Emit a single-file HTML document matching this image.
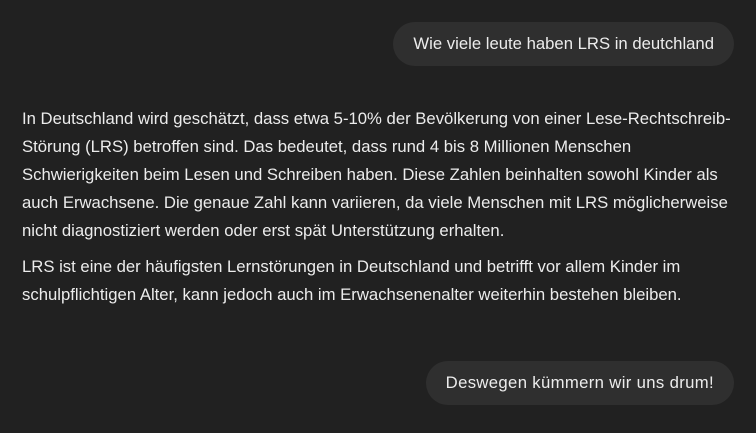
<!DOCTYPE html>
<html><head><meta charset="utf-8"><style>
html,body{margin:0;padding:0;background:#212121;width:756px;height:433px;overflow:hidden}
body{font-family:"Liberation Sans","DejaVu Sans",sans-serif;color:#ececec;font-size:16.7px;position:relative}
.b{position:absolute;background:#2f2f2f;border-radius:22px;height:44px;line-height:43px;padding:0 20px;white-space:nowrap;right:22px}
.p{position:absolute;left:22px;white-space:nowrap;line-height:28px}
.p div{height:28px}
</style></head><body>
<div class="b" style="top:22px">Wie viele leute haben LRS in deutchland</div>
<div class="p" style="top:105px">
<div>In Deutschland wird geschätzt, dass etwa 5-10% der Bevölkerung von einer Lese-Rechtschreib-</div>
<div>Störung (LRS) betroffen sind. Das bedeutet, dass rund 4 bis 8 Millionen Menschen</div>
<div>Schwierigkeiten beim Lesen und Schreiben haben. Diese Zahlen beinhalten sowohl Kinder als</div>
<div>auch Erwachsene. Die genaue Zahl kann variieren, da viele Menschen mit LRS möglicherweise</div>
<div>nicht diagnostiziert werden oder erst spät Unterstützung erhalten.</div>
</div>
<div class="p" style="top:253px">
<div>LRS ist eine der häufigsten Lernstörungen in Deutschland und betrifft vor allem Kinder im</div>
<div>schulpflichtigen Alter, kann jedoch auch im Erwachsenenalter weiterhin bestehen bleiben.</div>
</div>
<div class="b" style="top:361px;letter-spacing:0.35px">Deswegen kümmern wir uns drum!</div>
</body></html>
